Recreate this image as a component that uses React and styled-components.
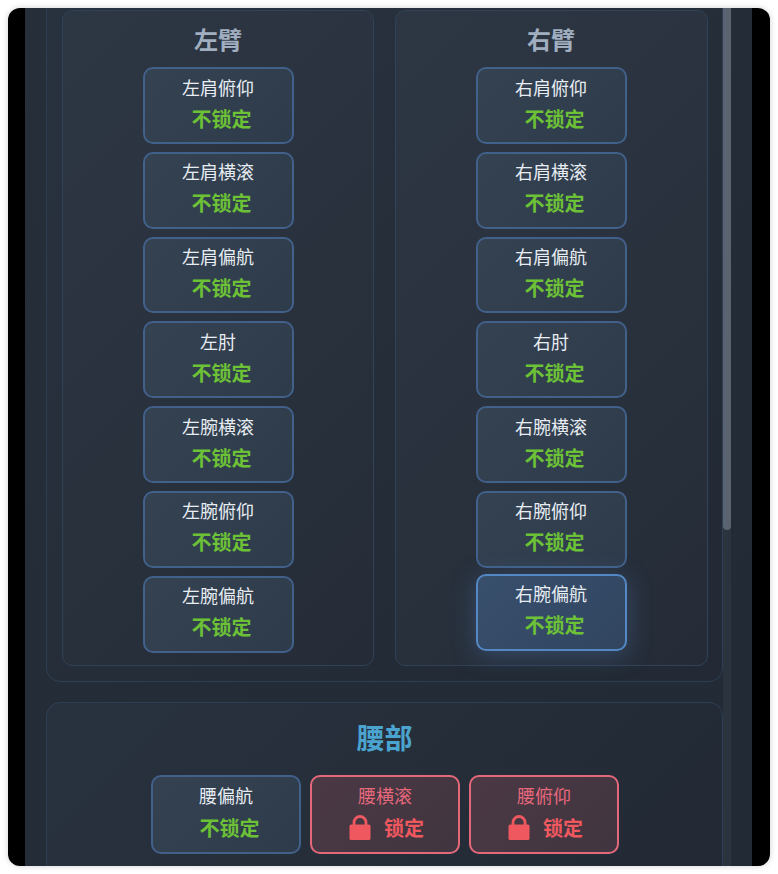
import React from 'react';
import styled, { createGlobalStyle } from 'styled-components';

const GlobalStyle = createGlobalStyle`
  html, body {
    margin: 0;
    height: 100%;
    background: #ffffff;
  }
  body {
    padding: 8px;
    box-sizing: border-box;
    font-family: "Noto Sans CJK SC", "Noto Sans", sans-serif;
  }
`;

const Window = styled.div`
  height: 858px;
  border-radius: 12px;
  overflow: hidden;
  background: #000000;
  box-shadow: 0 0 6px rgba(0, 0, 0, 0.18);
  padding: 0 18px 0 17px;
  box-sizing: border-box;
`;

const Panel = styled.div`
  height: 100%;
  display: flex;
  background: linear-gradient(135deg, #252e39, #222a35);
  overflow: hidden;
`;

const Content = styled.div`
  width: 698px;
  padding-left: 21px;
  box-sizing: border-box;
  display: flex;
  flex-direction: column;
  gap: 20px;
  margin-top: -14px;
`;

const ScrollTrack = styled.div`
  width: 8px;
  background: #2b333e;
`;

const ScrollThumb = styled.div`
  height: 522px;
  border-radius: 0 0 4px 4px;
  background: #5a6470;
`;

const Section = styled.section`
  border: 1px solid #2c3f56;
  border-radius: 14px;
  padding: 15px;
  background: linear-gradient(135deg, #28323e, #222934);
  flex-shrink: 0;
`;

const ArmGrid = styled.div`
  display: grid;
  grid-template-columns: 312px 313px;
  gap: 21px;
`;

const ArmCard = styled.div`
  border: 1px solid #2f4258;
  border-radius: 10px;
  padding: 9px ${p => (p.$right ? '1px' : '0')} 0 0;
  height: 656px;
  box-sizing: border-box;
  background: linear-gradient(135deg, #2d3743, #252c38);
  display: flex;
  flex-direction: column;
  align-items: center;
`;

const ArmTitle = styled.h3`
  margin: 0 0 10px;
  height: 37px;
  line-height: 37px;
  font-size: 24px;
  font-weight: 700;
  color: #a0aec0;
`;

const JointList = styled.div`
  display: flex;
  flex-direction: column;
  gap: 8px;
`;

const WaistTitle = styled.h2`
  margin: -2px 0 17px;
  height: 42px;
  line-height: 42px;
  text-align: center;
  font-size: 28px;
  font-weight: 700;
  color: #4ba3cf;
`;

const WaistRow = styled.div`
  display: flex;
  justify-content: center;
  gap: 8.5px;
  padding: 0 0 12px 1px;
`;

const JointButton = styled.div`
  width: ${p => (p.$waist ? '150.5px' : '151px')};
  height: ${p => (p.$waist ? '79px' : '76.8px')};
  box-sizing: border-box;
  border: 2px solid ${p => (p.$locked ? '#e2687a' : p.$active ? '#5488c4' : '#41608a')};
  border-radius: 10px;
  background: ${p =>
    p.$locked
      ? 'linear-gradient(135deg, #4b3944, #403540)'
      : p.$active
        ? 'linear-gradient(135deg, #384f6c, #314560)'
        : 'linear-gradient(135deg, #344252, #2e3b4b)'};
  box-shadow: ${p => (p.$active ? '0 4px 24px rgba(84, 136, 196, 0.34)' : 'none')};
  transform: ${p => (p.$active ? 'translateY(-2px)' : 'none')};
  display: flex;
  flex-direction: column;
  align-items: center;
  padding-top: ${p => (p.$waist ? '5px' : '4.5px')};
`;

const JointName = styled.div`
  height: 26px;
  line-height: 26px;
  font-size: 18px;
  white-space: nowrap;
  color: ${p => (p.$locked ? '#e8687c' : '#e8edf3')};
`;

const JointState = styled.div`
  display: flex;
  align-items: center;
  gap: 13px;
  height: 30px;
  margin-top: ${p => (p.$waist ? '4.5px' : '4px')};
  margin-left: ${p => (p.$locked ? '3px' : '7px')};
  font-size: 20px;
  line-height: 30px;
  font-weight: 700;
  white-space: nowrap;
  color: ${p => (p.$locked ? '#f0585f' : '#6cc136')};
`;

const LockIcon = () => (
  <svg width="22" height="26" viewBox="0 0 22 26" aria-hidden="true">
    <path d="M5 11V7.5a6 6 0 0 1 12 0V11" fill="none" stroke="#f0585f" strokeWidth="2.8" />
    <rect x="0.5" y="9.5" width="21" height="15.5" rx="1.6" fill="#f0585f" />
  </svg>
);

const Joint = ({ name, locked, active, waist }) => (
  <JointButton $locked={locked} $active={active} $waist={waist}>
    <JointName $locked={locked}>{name}</JointName>
    <JointState $locked={locked} $waist={waist}>
      {locked && <LockIcon />}
      {locked ? '锁定' : '不锁定'}
    </JointState>
  </JointButton>
);

const jointNames = ['肩俯仰', '肩横滚', '肩偏航', '肘', '腕横滚', '腕俯仰', '腕偏航'];

const Arm = ({ side }) => (
  <ArmCard $right={side === '右'}>
    <ArmTitle>{side}臂</ArmTitle>
    <JointList>
      {jointNames.map(n => (
        <Joint key={n} name={side + n} active={side === '右' && n === '腕偏航'} />
      ))}
    </JointList>
  </ArmCard>
);

export default function App() {
  return (
    <>
      <GlobalStyle />
      <Window>
        <Panel>
          <Content>
            <Section>
              <ArmGrid>
                <Arm side="左" />
                <Arm side="右" />
              </ArmGrid>
            </Section>
            <Section>
              <WaistTitle>腰部</WaistTitle>
              <WaistRow>
                <Joint waist name="腰偏航" />
                <Joint waist locked name="腰横滚" />
                <Joint waist locked name="腰俯仰" />
              </WaistRow>
            </Section>
          </Content>
          <ScrollTrack>
            <ScrollThumb />
          </ScrollTrack>
        </Panel>
      </Window>
    </>
  );
}
